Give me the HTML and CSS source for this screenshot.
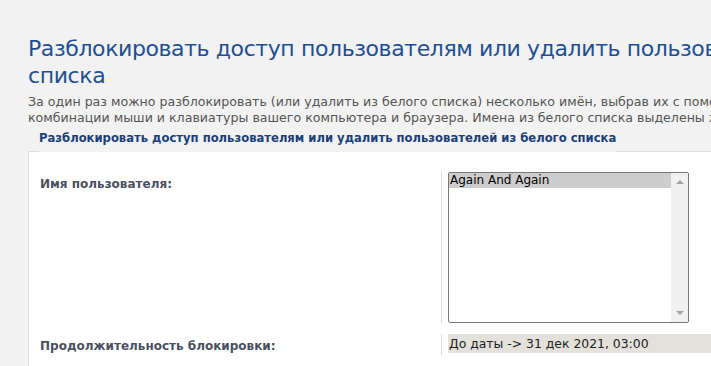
FILE: index.html
```html
<!DOCTYPE html>
<html lang="ru">

<head>
    <meta charset="UTF-8" />
    <title>Разблокировать доступ пользователям</title>
    <link rel="stylesheet" href="styles.css">
</head>

<body>

    <div class="page">
        <h1 class="title">Разблокировать доступ пользователям или удалить пользователей из белого<br>списка</h1>
        <p class="hint">За один раз можно разблокировать (или удалить из белого списка) несколько имён, выбрав их с помощью соответствующей<br>
            комбинации мыши и клавиатуры вашего компьютера и браузера. Имена из белого списка выделены жирным шрифтом.</p>

        <!-- Заголовок вкладки -->
        <div class="tabs">
            <span class="tab-edge"></span>
            <span class="tab">Разблокировать доступ пользователям или удалить пользователей из белого списка</span>
            <span class="tab-rest"></span>
        </div>

        <div class="panel">
            <div class="row">
                <div class="label">Имя пользователя:</div>
                <div class="field">
                    <div class="listbox">
                        <div class="options">
                            <div class="option selected">Again And Again</div>
                        </div>
                        <div class="scrollbar">
                            <span class="arrow up"></span>
                            <span class="arrow down"></span>
                        </div>
                    </div>
                </div>
            </div>

            <div class="row">
                <div class="label">Продолжительность блокировки:</div>
                <div class="field">
                    <div class="value">До даты -&gt; 31 дек 2021, 03:00</div>
                </div>
            </div>

            <div class="row">
                <div class="label"></div>
                <div class="field">
                    <div class="next"></div>
                </div>
            </div>
        </div>
    </div>

</body>

</html>
```

FILE: styles.css
```css
html, body {
    margin: 0;
    padding: 0;
    overflow: hidden;
}

body {
    background-color: #f2f2f2;
    font-family: "DejaVu Sans", Verdana, sans-serif;
}

.page {
    width: 1200px;
    padding: 35px 0 0 28px;
}

/* Заголовок */
.title {
    margin: 0;
    font-size: 22px;
    font-weight: normal;
    line-height: 27px;
    letter-spacing: -0.4px;
    color: #1f4f91;
    white-space: nowrap;
}

.hint {
    margin: 5px 0 0 0;
    font-size: 12.6px;
    line-height: 16px;
    color: #555;
    white-space: nowrap;
}

/* Вкладка */
.tabs {
    display: flex;
    align-items: stretch;
}

.tab-edge {
    width: 11px;
    border-bottom: 1px solid #ddd;
}

.tab {
    padding: 4px 0 5px 0;
    font-size: 11.6px;
    font-weight: bold;
    line-height: 17px;
    color: #1a3f78;
    white-space: nowrap;
}

.tab-rest {
    flex: 1;
    border-bottom: 1px solid #ddd;
}

/* Панель формы */
.panel {
    display: flex;
    flex-direction: column;
    gap: 11px;
    background-color: #fff;
    border-left: 1px solid #ddd;
    padding: 20px 0 0 0;
    height: 400px;
}

.row {
    display: flex;
}

.label {
    width: 401px;
    padding: 4px 0 0 11px;
    font-size: 12px;
    font-weight: bold;
    line-height: 17px;
    color: #4a5060;
}

.field {
    flex: 1;
    border-left: 1px solid #ddd;
    padding-left: 6px;
}

/* Список пользователей */
.listbox {
    display: flex;
    width: 239px;
    height: 149px;
    border: 1px solid #777;
    border-radius: 2px;
}

.options {
    flex: 1;
}

.option {
    font-size: 12px;
    line-height: 15px;
    color: #000;
    padding-left: 1px;
}

.option.selected {
    background-color: #cdcdcd;
}

.scrollbar {
    width: 17px;
    background-color: #f0f0f0;
    display: flex;
    flex-direction: column;
    justify-content: space-between;
    align-items: center;
    padding: 7px 0;
}

.arrow {
    width: 0;
    height: 0;
    border-left: 4px solid transparent;
    border-right: 4px solid transparent;
}

.arrow.up {
    border-bottom: 4px solid #a3a3a3;
}

.arrow.down {
    border-top: 4px solid #a3a3a3;
}

/* Значение */
.value {
    background-color: #e4e0db;
    font-size: 12.4px;
    line-height: 19px;
    padding-left: 1px;
    color: #222;
}

.next {
    height: 20px;
    border-top: 1px solid #ddd;
}
```
